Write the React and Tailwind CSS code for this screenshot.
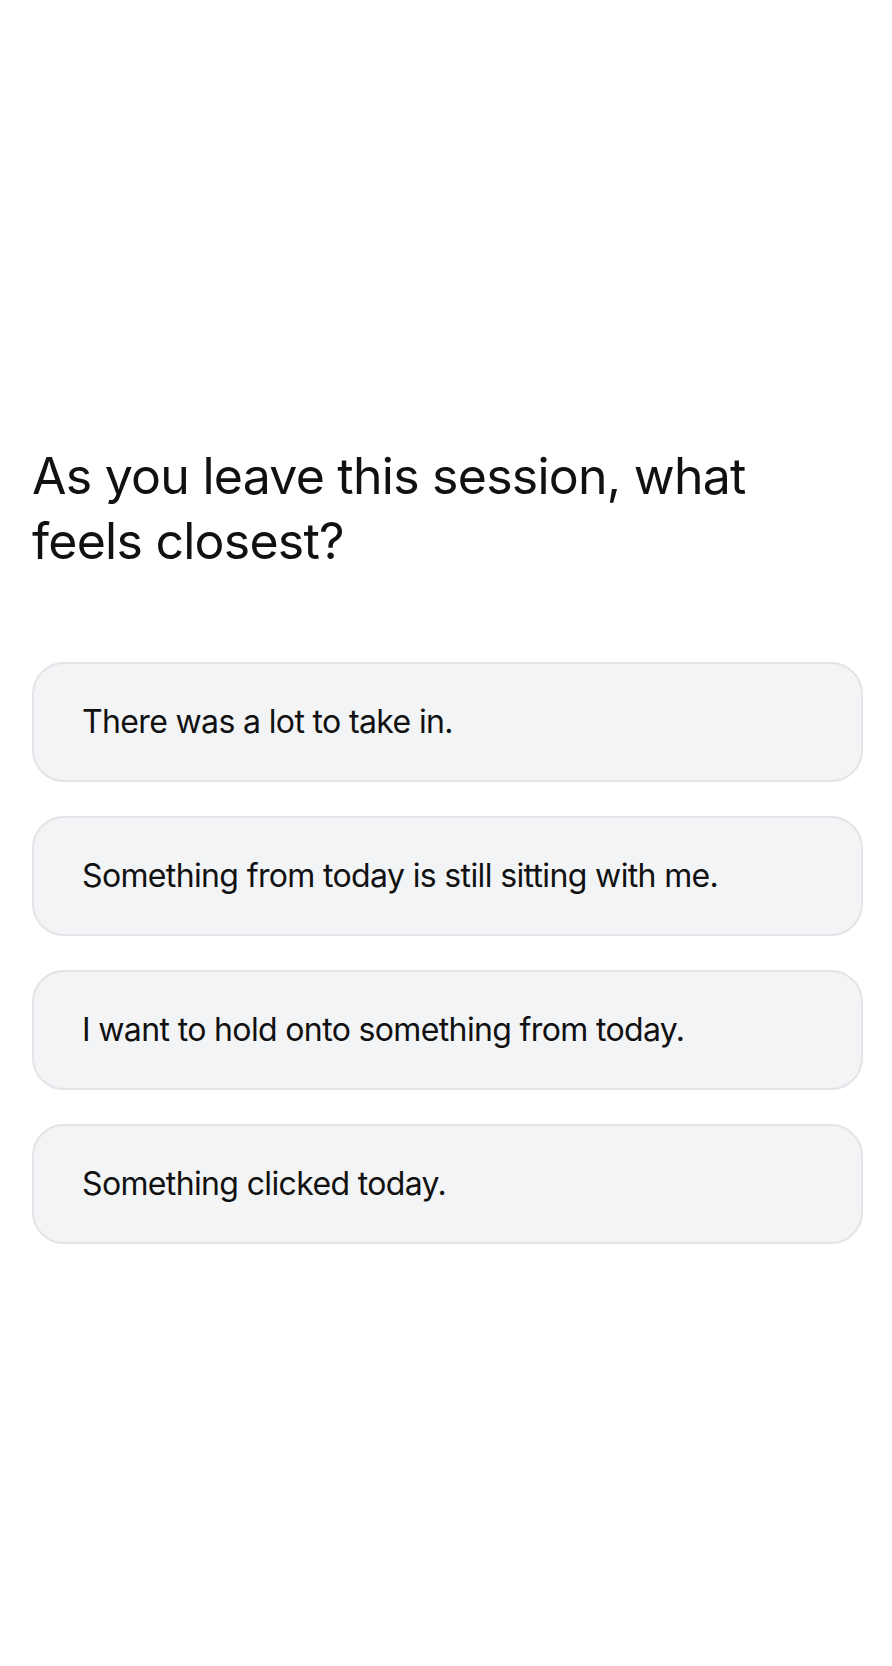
import React from 'react';

const options = [
  'There was a lot to take in.',
  'Something from today is still sitting with me.',
  'I want to hold onto something from today.',
  'Something clicked today.',
];

export default function App() {
  return (
    <div
      className="min-h-[1666px] bg-white text-[#111111] pl-[32px] pr-[29px] pt-[444px]"
      style={{ fontFamily: 'Inter, "Noto Sans", sans-serif' }}
    >
      <h1 className="text-[50px] leading-[65px] font-normal tracking-[-0.015em] pr-[100px]">
        As you leave this session, what feels closest?
      </h1>

      <div className="mt-[88px] flex flex-col gap-[34px]">
        {options.map((label) => (
          <button
            key={label}
            className="h-[120px] w-full flex items-center rounded-[32px] border-2 border-[#e3e4e7] bg-[#f3f4f6] pl-[48px] text-left text-[32px] tracking-[-0.02em]"
          >
            {label}
          </button>
        ))}
      </div>
    </div>
  );
}
